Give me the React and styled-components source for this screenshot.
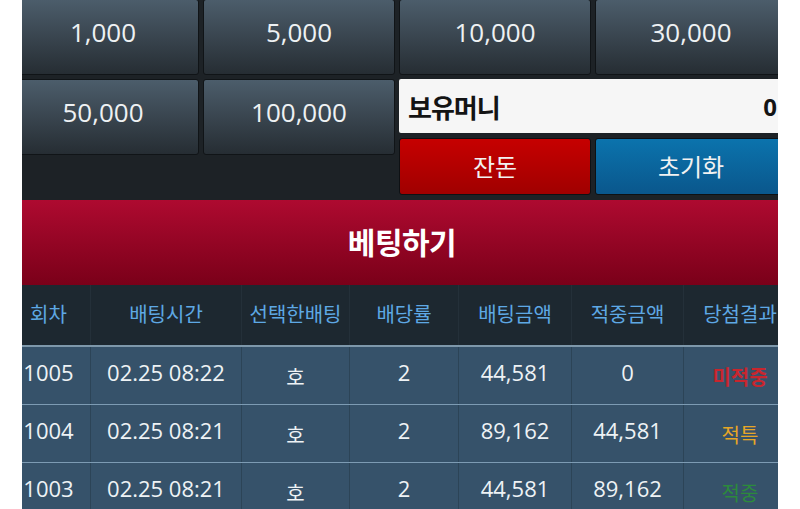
import React from 'react'
import styled, { createGlobalStyle } from 'styled-components'

const Global = createGlobalStyle`
  html, body {
    margin: 0;
    padding: 0;
    background: #ffffff;
  }
  body {
    font-family: 'Open Sans', 'Noto Sans CJK KR', sans-serif;
  }
`

const Frame = styled.div`
  margin-left: 22px;
  width: 756px;
  height: 509px;
  overflow: hidden;
`

const Inner = styled.div`
  width: 790px;
  margin-left: -15px;
  margin-top: -1px;
`

const TopArea = styled.div`
  background: #1d2226;
  padding-bottom: 5px;
`

const ChipGrid = styled.div`
  display: grid;
  grid-template-columns: repeat(4, 192px);
  grid-template-rows: 76px auto;
  gap: 4px;
  align-items: start;
`

const ChipButton = styled.div`
  height: 76px;
  box-sizing: border-box;
  border: 1px solid #101417;
  border-radius: 3px;
  background: linear-gradient(to bottom, #4c5d6b, #262d33);
  color: #eef1f3;
  font-size: 26px;
  display: flex;
  align-items: center;
  justify-content: center;
  padding-bottom: 11px;
`

const Wallet = styled.div`
  grid-column: span 2;
  display: grid;
  grid-template-columns: 1fr 1fr;
  grid-template-rows: 54px 57px;
  gap: 5px 4px;
`

const MoneyBox = styled.div`
  grid-column: span 2;
  background: #f6f6f6;
  border-radius: 2px;
  display: flex;
  align-items: center;
  justify-content: space-between;
  padding: 0 10px 0 9px;
  font-family: 'Noto Sans CJK KR', 'Open Sans', sans-serif;
  font-weight: 700;
  font-size: 26px;
  letter-spacing: -1px;
  color: #141414;
`

const MoneyValue = styled.span`
  font-family: 'Open Sans', sans-serif;
  font-weight: 700;
  font-size: 24px;
  letter-spacing: 0;
`

const ActionButton = styled.div`
  box-sizing: border-box;
  border: 1px solid #0e1114;
  border-radius: 3px;
  background: ${p => p.$tone === 'red'
    ? 'linear-gradient(to bottom, #c60000, #a00000)'
    : 'linear-gradient(to bottom, #0b73ad, #0a578c)'};
  color: #f2f2f2;
  font-family: 'Noto Sans CJK KR', sans-serif;
  font-size: 24px;
  display: flex;
  align-items: center;
  justify-content: center;
  padding-bottom: 2px;
`

const BetBanner = styled.div`
  height: 85px;
  background: linear-gradient(to bottom, #ae0a30, #7a0019);
  color: #ffffff;
  font-family: 'Noto Sans CJK KR', sans-serif;
  font-weight: 700;
  font-size: 30px;
  letter-spacing: -0.5px;
  display: flex;
  align-items: center;
  justify-content: center;
  padding-bottom: 4px;
  box-sizing: border-box;
`

const COLS = '84px 151px 108px 109px 113px 112px 113px'

const HeadRow = styled.div`
  display: grid;
  grid-template-columns: ${COLS};
  height: 62px;
  background: #1d2830;
  border-bottom: 2px solid #7e98ab;
  box-sizing: border-box;
`

const HeadCell = styled.div`
  display: flex;
  align-items: center;
  justify-content: center;
  color: #5ea8e4;
  font-family: 'Noto Sans CJK KR', sans-serif;
  font-size: 20px;
  white-space: nowrap;
  border-right: 1px solid #243039;
  padding-bottom: 4px;
`

const Row = styled.div`
  display: grid;
  grid-template-columns: ${COLS};
  height: 58px;
  background: #36526a;
  border-bottom: 1px solid #7d9bb3;
  box-sizing: border-box;
`

const Cell = styled.div`
  display: flex;
  align-items: center;
  justify-content: center;
  color: #eef2f5;
  font-size: 22px;
  white-space: nowrap;
  border-right: 1px solid #2c4457;
  padding-bottom: 8px;
`

const Pick = styled.span`
  font-family: 'Noto Sans CJK KR', sans-serif;
  font-size: 20px;
  padding-top: 10px;
`

const RESULT_COLORS = {
  '미적중': '#c8262e',
  '적특': '#e6a626',
  '적중': '#2c8a3c',
}

const Result = styled.span`
  font-family: 'Noto Sans CJK KR', sans-serif;
  font-size: 20px;
  font-weight: ${p => (p.$bold ? 700 : 400)};
  color: ${p => p.$color};
  padding-top: 10px;
`

const chips = ['1,000', '5,000', '10,000', '30,000']
const headers = ['회차', '배팅시간', '선택한배팅', '배당률', '배팅금액', '적중금액', '당첨결과']
const rows = [
  ['1005', '02.25 08:22', '호', '2', '44,581', '0', '미적중'],
  ['1004', '02.25 08:21', '호', '2', '89,162', '44,581', '적특'],
  ['1003', '02.25 08:21', '호', '2', '44,581', '89,162', '적중'],
]

export default function App() {
  return (
    <Frame>
      <Global />
      <Inner>
        <TopArea>
          <ChipGrid>
            {chips.map(c => <ChipButton key={c}>{c}</ChipButton>)}
            <ChipButton>50,000</ChipButton>
            <ChipButton>100,000</ChipButton>
            <Wallet>
              <MoneyBox>
                <span>보유머니</span>
                <MoneyValue>0</MoneyValue>
              </MoneyBox>
              <ActionButton $tone="red">잔돈</ActionButton>
              <ActionButton $tone="blue">초기화</ActionButton>
            </Wallet>
          </ChipGrid>
        </TopArea>
        <BetBanner>베팅하기</BetBanner>
        <HeadRow>
          {headers.map(h => <HeadCell key={h}>{h}</HeadCell>)}
        </HeadRow>
        {rows.map(r => (
          <Row key={r[0]}>
            <Cell>{r[0]}</Cell>
            <Cell>{r[1]}</Cell>
            <Cell><Pick>{r[2]}</Pick></Cell>
            <Cell>{r[3]}</Cell>
            <Cell>{r[4]}</Cell>
            <Cell>{r[5]}</Cell>
            <Cell>
              <Result $color={RESULT_COLORS[r[6]]} $bold={r[6] === '미적중'}>{r[6]}</Result>
            </Cell>
          </Row>
        ))}
      </Inner>
    </Frame>
  )
}
